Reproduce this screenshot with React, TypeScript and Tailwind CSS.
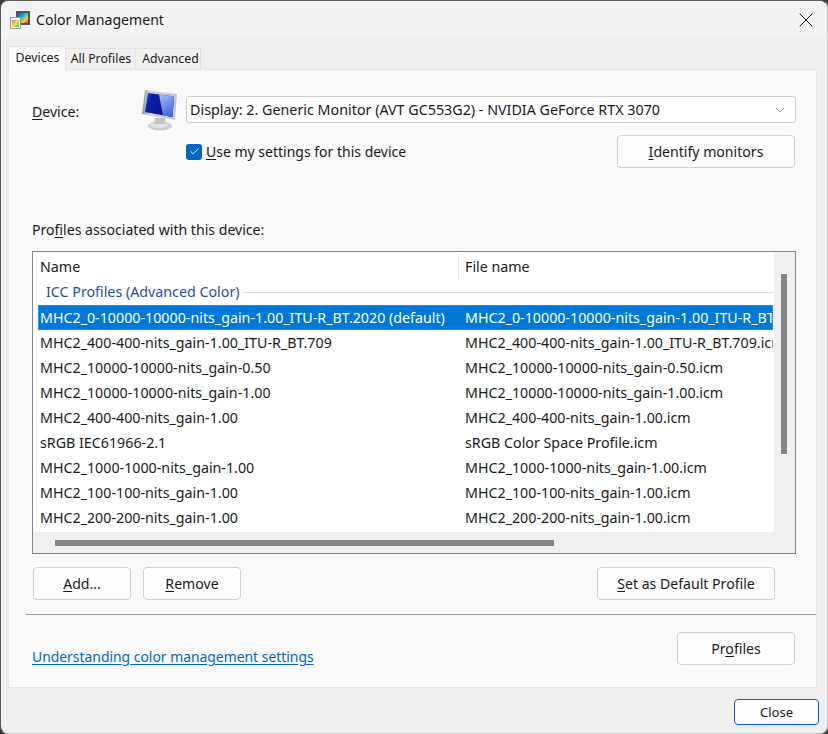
import { Check, ChevronDown, X } from "lucide-react"
import type { ReactNode } from "react"
import { twMerge } from "tailwind-merge"

const rows = [
	["MHC2_400-400-nits_gain-1.00_ITU-R_BT.709", "MHC2_400-400-nits_gain-1.00_ITU-R_BT.709.icm"],
	["MHC2_10000-10000-nits_gain-0.50", "MHC2_10000-10000-nits_gain-0.50.icm"],
	["MHC2_10000-10000-nits_gain-1.00", "MHC2_10000-10000-nits_gain-1.00.icm"],
	["MHC2_400-400-nits_gain-1.00", "MHC2_400-400-nits_gain-1.00.icm"],
	["sRGB IEC61966-2.1", "sRGB Color Space Profile.icm"],
	["MHC2_1000-1000-nits_gain-1.00", "MHC2_1000-1000-nits_gain-1.00.icm"],
	["MHC2_100-100-nits_gain-1.00", "MHC2_100-100-nits_gain-1.00.icm"],
	["MHC2_200-200-nits_gain-1.00", "MHC2_200-200-nits_gain-1.00.icm"],
]

function Btn(props: { children: ReactNode; className?: string }) {
	return (
		<button
			type="button"
			className={twMerge(
				"flex h-[33px] shrink-0 items-center justify-center rounded-[4px] border border-[#d0d0d0] bg-[#fdfdfd] text-[#1a1a1a]",
				props.className,
			)}
		>
			{props.children}
		</button>
	)
}

function MonitorIcon() {
	return (
		<svg width="38" height="44" viewBox="0 0 38 44" className="shrink-0">
			<defs>
				<linearGradient id="scr" x1="0" y1="0" x2="1" y2="0.3">
					<stop offset="0" stopColor="#2f55e6" />
					<stop offset="0.25" stopColor="#0a1fa8" />
					<stop offset="1" stopColor="#08178c" />
				</linearGradient>
				<linearGradient id="hl" x1="0" y1="0" x2="0.4" y2="1">
					<stop offset="0" stopColor="#a9bff2" />
					<stop offset="1" stopColor="#4a6cdc" />
				</linearGradient>
				<linearGradient id="bz" x1="0" y1="0" x2="1" y2="0">
					<stop offset="0" stopColor="#8f959b" />
					<stop offset="0.25" stopColor="#d6d9db" />
					<stop offset="1" stopColor="#c3c7ca" />
				</linearGradient>
			</defs>
			<ellipse cx="18" cy="38" rx="12" ry="4.5" fill="#cfcfcf" />
			<ellipse cx="17" cy="37" rx="9" ry="3" fill="#e2e2e2" />
			<path d="M13 30h10l1 6H12z" fill="#c4c4c4" />
			<path d="M3 2 35 6 33 32 0 26Z" fill="url(#bz)" />
			<path d="M6 5 32 8.500 30.500 29 3 24Z" fill="url(#scr)" />
			<path d="M17 6.500 32 8.500 30.500 29 21 27.300Z" fill="url(#hl)" />
		</svg>
	)
}

function AppIcon() {
	return (
		<svg width="20" height="20" viewBox="0 0 20 20" className="shrink-0">
			<defs>
				<linearGradient id="rb" x1="0" y1="0" x2="1" y2="1">
					<stop offset="0" stopColor="#2a3fd0" />
					<stop offset="0.4" stopColor="#21b5c9" />
					<stop offset="0.7" stopColor="#f2d23a" />
					<stop offset="1" stopColor="#e0304a" />
				</linearGradient>
				<linearGradient id="rc" x1="0" y1="0" x2="1" y2="1">
					<stop offset="0" stopColor="#e05ac0" />
					<stop offset="0.5" stopColor="#f4e04a" />
					<stop offset="1" stopColor="#3cc46a" />
				</linearGradient>
			</defs>
			<rect x="6" y="1" width="14" height="14" fill="#4a5568" />
			<rect x="8" y="3" width="10" height="10" fill="url(#rb)" />
			<rect x="0.500" y="7.500" width="10" height="11" fill="#f2f2f2" stroke="#9a9a9a" />
			<rect x="2" y="10" width="7" height="7" fill="url(#rc)" />
		</svg>
	)
}

function Cell(props: { children: ReactNode; className?: string }) {
	return (
		<div className={twMerge("overflow-hidden whitespace-nowrap pl-[2px]", props.className)}>
			{props.children}
		</div>
	)
}

export default function App() {
	return (
		<div
			className="h-[734px] w-[828px] overflow-hidden bg-[#3d3d3d] text-[14.1px] text-[#1a1a1a]"
			style={{ fontFamily: '"Noto Sans", sans-serif' }}
		>
			<div className="flex h-full flex-col rounded-[8px] border border-[#5a5a5a] border-r-[#c4c4c4] border-b-[#c4c4c4] bg-[#efefef]">
				<div className="flex h-[37px] shrink-0 items-center rounded-t-[8px] bg-[#f3f3f3] pl-[9px] pr-[9px]">
					<AppIcon />
					<span className="ml-[6px] flex-1">Color Management</span>
					<X className="size-[24px]" strokeWidth={1} />
				</div>

				<div className="flex h-[31px] shrink-0 items-end pl-[7px] text-[12.3px]">
					<div className="z-10 -mb-px flex h-[24px] w-[58px] items-center justify-center rounded-t-[2px] border border-b-0 border-[#e2e2e2] bg-[#f9f9f9] pl-px">
						Devices
					</div>
					<div className="flex h-[21px] w-[70px] items-center justify-center border-t border-r border-[#e2e2e2] bg-[#f0f0f0] pl-px">
						All Profiles
					</div>
					<div className="flex h-[21px] w-[65px] items-center justify-center border-t border-r border-[#e2e2e2] bg-[#f0f0f0] pl-[5px]">
						Advanced
					</div>
				</div>

				<div className="ml-[7px] mr-[10px] flex h-[619px] shrink-0 flex-col border border-[#e5e5e5] bg-[#f9f9f9]">
					<div className="mt-[26px] flex h-[27px] items-center pl-[23px] pr-[20px]">
						<span className="mt-[5px] w-[110px]">
							<u className="underline-offset-2">D</u>evice:
						</span>
						<MonitorIcon />
						<div className="ml-[6px] flex h-[27px] flex-1 items-center justify-between rounded-[3px] border border-[#cfcfcf] bg-white pl-[3px] pr-[8px] text-[14.3px]">
							<span className="mt-px">Display: 2. Generic Monitor (AVT GC553G2) - NVIDIA GeForce RTX 3070</span>
							<ChevronDown className="size-[14px] text-[#555]" strokeWidth={1.3} />
						</div>
					</div>

					<div className="mt-[12px] flex h-[33px] items-center pl-[177px] pr-[21px]">
						<span className="flex size-[16px] items-center justify-center rounded-[3px] bg-[#0067c0]">
							<Check className="size-[11px] text-white" strokeWidth={2} />
						</span>
						<span className="ml-[4px] flex-1 text-[14px]">
							<u className="underline-offset-2">U</u>se my settings for this device
						</span>
						<Btn className="w-[178px]">
							<span><u className="underline-offset-2">I</u>dentify monitors</span>
						</Btn>
					</div>

					<div className="mt-[52px] h-[20px] pl-[23px] leading-[20px]">
						Pro<u className="underline-offset-2">f</u>iles associated with this device:
					</div>

					<div className="ml-[23px] mr-[20px] mt-[11px] flex h-[303px] flex-col border border-[#82858a] bg-[#f0f0f0]">
						<div className="flex min-h-0 flex-1">
							<div className="w-[741px] bg-white text-[14.25px]">
								<div className="flex h-[30px] items-center">
									<Cell className="w-[425px] pl-[7px]">Name</Cell>
									<div className="h-[24px] w-px bg-[#e5e5e5]" />
									<Cell className="pl-[6px]">File name</Cell>
								</div>
								<div className="flex h-[23px] items-center pb-[3px] pl-[13px]">
									<span className="text-[#1f4fa0]">ICC Profiles (Advanced Color)</span>
									<div className="ml-[4px] h-px flex-1 bg-[#d8dcec]" />
								</div>
								<div className="ml-[5px] mr-px flex h-[25px] items-center border border-dotted border-[#f07f10] bg-[#0078d7] text-white">
									<Cell className="w-[424px] pl-px">MHC2_0-10000-10000-nits_gain-1.00_ITU-R_BT.2020 (default)</Cell>
									<Cell className="flex-1">MHC2_0-10000-10000-nits_gain-1.00_ITU-R_BT.2020.icm</Cell>
								</div>
								{rows.map((row) => (
									<div key={row[0]} className="ml-[5px] mr-px flex h-[25px] items-center">
										<Cell className="w-[425px]">{row[0]}</Cell>
										<Cell className="flex-1">{row[1]}</Cell>
									</div>
								))}
							</div>
							<div className="flex-1 pl-[7px] pt-[22px]">
								<div className="h-[180px] w-[6px] bg-[#858585]" />
							</div>
						</div>
						<div className="flex h-[21px] shrink-0 items-center pl-[22px]">
							<div className="h-[6px] w-[499px] bg-[#858585]" />
						</div>
					</div>

					<div className="mt-[13px] flex pl-[24px] pr-[41px]">
						<Btn className="w-[98px]">
							<span><u className="underline-offset-2">A</u>dd...</span>
						</Btn>
						<Btn className="ml-[12px] w-[98px]">
							<span><u className="underline-offset-2">R</u>emove</span>
						</Btn>
						<Btn className="ml-auto w-[178px]">
							<span><u className="underline-offset-2">S</u>et as Default Profile</span>
						</Btn>
					</div>

					<div className="ml-[17px] mt-[14px] h-px bg-[#a5a5a5]" />

					<div className="mt-[17px] flex pl-[23px] pr-[21px]">
						<a className="mt-[15px] flex-1 text-[13.9px] text-[#0067c0] underline underline-offset-2" href="#">
							Understanding color management settings
						</a>
						<Btn className="w-[118px]">
							<span>Pr<u className="underline-offset-2">o</u>files</span>
						</Btn>
					</div>
				</div>

				<div className="flex flex-1 items-start justify-end pr-[8px] pt-[11px]">
					<Btn className="h-[26px] w-[85px] border-[#0067c0] pt-px text-[13px]">Close</Btn>
				</div>
			</div>
		</div>
	)
}
